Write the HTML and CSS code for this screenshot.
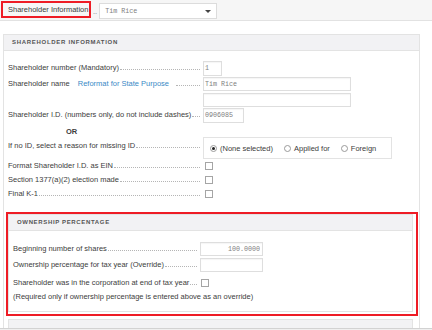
FILE: index.html
```html
<!DOCTYPE html>
<html lang="en">
<head>
  <meta charset="UTF-8" />
  <title>Shareholder Information</title>
  <link rel="stylesheet" href="styles.css">
</head>
<body>
  <div class="page">
    <div class="topbar">
      <div class="tab">Shareholder Information</div>
      <span class="tab-dots">..</span>
      <div class="select">
        <span class="select-value">Tim Rice</span>
        <span class="caret"></span>
      </div>
    </div>

    <div class="main">
      <div class="panel">
        <div class="panel-head">SHAREHOLDER INFORMATION</div>
        <div class="panel-body">

          <div class="row r-num">
            <div class="label"><span>Shareholder number (Mandatory)</span><span class="leader"></span></div>
            <input class="field w-num" type="text" value="1">
          </div>

          <div class="row r-name">
            <div class="label">
              <span>Shareholder name</span>
              <a class="link" href="#">Reformat for State Purpose</a>
              <span class="leader leader-short"></span>
            </div>
            <input class="field w-name" type="text" value="Tim Rice">
          </div>

          <div class="row r-name2">
            <div class="label"></div>
            <input class="field w-name" type="text" value="">
          </div>

          <div class="row r-id">
            <div class="label"><span>Shareholder I.D. (numbers only, do not include dashes)</span><span class="leader"></span></div>
            <input class="field w-id" type="text" value="0906085">
          </div>

          <div class="or">OR</div>

          <div class="row r-radio">
            <div class="label label-top"><span>If no ID, select a reason for missing ID</span><span class="leader"></span></div>
            <div class="radio-box">
              <span class="option"><span class="radio checked"></span>(None selected)</span>
              <span class="option"><span class="radio"></span>Applied for</span>
              <span class="option"><span class="radio"></span>Foreign</span>
            </div>
          </div>

          <div class="row r-check">
            <div class="label"><span>Format Shareholder I.D. as EIN</span><span class="leader"></span></div>
            <span class="checkbox"></span>
          </div>
          <div class="row r-check">
            <div class="label"><span>Section 1377(a)(2) election made</span><span class="leader"></span></div>
            <span class="checkbox"></span>
          </div>
          <div class="row r-check">
            <div class="label"><span>Final K-1</span><span class="leader"></span></div>
            <span class="checkbox"></span>
          </div>

          <div class="highlight">
            <div class="subpanel">
              <div class="panel-head sub-head">OWNERSHIP PERCENTAGE</div>
              <div class="sub-body">
                <div class="row r-own">
                  <div class="label label-own"><span>Beginning number of shares</span><span class="leader"></span></div>
                  <input class="field w-own num" type="text" value="100.0000">
                </div>
                <div class="row r-own">
                  <div class="label label-own"><span>Ownership percentage for tax year (Override)</span><span class="leader"></span></div>
                  <input class="field w-own" type="text" value="">
                </div>
                <div class="row r-own-check">
                  <div class="label label-own"><span>Shareholder was in the corporation at end of tax year</span><span class="leader"></span></div>
                  <span class="checkbox"></span>
                </div>
                <div class="note">(Required only if ownership percentage is entered above as an override)</div>
              </div>
            </div>
          </div>

          <div class="subpanel next">
            <div class="panel-head sub-head">&nbsp;</div>
            <div class="sub-body tall"></div>
          </div>

        </div>
      </div>
    </div>

    <div class="hbar"></div>
  </div>
</body>
</html>
```

FILE: styles.css
```css
:root {
  --text: #3c3c3c;
  --muted: #808080;
  --line: #e3e3e3;
  --head-bg: #f2f2f4;
  --red: #ee1c25;
  --link: #3a8ac6;
}

* {
  box-sizing: border-box;
  margin: 0;
  padding: 0;
}

body {
  font-family: "Liberation Sans", Arial, sans-serif;
  font-size: 7.5px;
  color: var(--text);
  background: #ffffff;
}

.page {
  height: 330px;
  display: flex;
  flex-direction: column;
  overflow: hidden;
}

/* top strip with the section picker */
.topbar {
  height: 21px;
  flex: none;
  display: flex;
  align-items: flex-start;
  padding: 1px 0 0 1px;
  background: #f6f6f6;
  border-bottom: 1px solid #e2e2e2;
}

.tab {
  width: 90px;
  height: 17px;
  border: 2px solid var(--red);
  padding-left: 5px;
  line-height: 13px;
  background: #f7f7f7;
}

.tab-dots {
  margin: 6px 0 0 2px;
  line-height: 10px;
  color: var(--muted);
}

.select {
  width: 118px;
  height: 16px;
  margin: 2px 0 0 2px;
  border: 1px solid #dcdcdc;
  background: #ffffff;
  display: flex;
  align-items: center;
  justify-content: space-between;
  padding: 0 5px 0 5px;
}

.select-value {
  font-family: "Liberation Mono", monospace;
  font-size: 6.7px;
  color: var(--muted);
}

.caret {
  width: 0;
  height: 0;
  border-left: 3px solid transparent;
  border-right: 3px solid transparent;
  border-top: 3px solid #444444;
}

.main {
  flex: 1;
  overflow: hidden;
  padding-top: 13px;
}

.panel {
  width: 417px;
  margin-left: 3px;
  border: 1px solid var(--line);
  border-bottom: 0;
  min-height: 400px;
}

.panel-head {
  height: 16px;
  background: var(--head-bg);
  border-bottom: 1px solid var(--line);
  padding-left: 8px;
  font-size: 6px;
  font-weight: bold;
  letter-spacing: 0.7px;
  line-height: 15px;
  color: #555555;
}

.panel-body {
  padding: 9px 1px 0 4px;
}

.row {
  display: flex;
  align-items: center;
}

.r-num { height: 16px; }
.r-name { height: 16px; }
.r-name2 { height: 15px; }
.r-id { height: 16px; }
.r-radio { height: 22px; }
.r-check { height: 14px; }

.label {
  width: 192px;
  flex: none;
  display: flex;
  align-items: baseline;
  margin-right: 3px;
  white-space: nowrap;
  line-height: 10px;
}

.label-top {
  align-self: flex-start;
  margin-top: 4px;
}

.leader {
  flex: 1;
  margin-left: 1px;
  border-bottom: 1px dotted #b5b5b5;
}

.link {
  color: var(--link);
  text-decoration: none;
  margin-left: 8px;
}

.leader-short {
  margin-left: 7px;
}

.field {
  height: 14px;
  border: 1px solid #dedede;
  box-shadow: inset 0 1px 1px rgba(0, 0, 0, 0.04);
  font-family: "Liberation Mono", monospace;
  font-size: 6.7px;
  color: var(--muted);
  padding: 0 1px;
  outline: none;
  background: #ffffff;
}

.w-num { width: 19px; height: 15px; }
.w-name { width: 148px; }
.w-id { width: 41px; height: 15px; }
.w-own { width: 63px; }
.num { text-align: right; padding-right: 2px; }

.or {
  height: 14px;
  padding: 4px 0 0 58px;
  line-height: 10px;
  font-weight: bold;
}

.radio-box {
  width: 189px;
  height: 22px;
  border: 1px solid var(--line);
  display: flex;
  align-items: center;
  padding-left: 6px;
}

.option {
  display: flex;
  align-items: center;
  margin-right: 11px;
  white-space: nowrap;
}

.radio {
  width: 7px;
  height: 7px;
  border: 1px solid #9a9a9a;
  border-radius: 50%;
  margin-right: 3px;
  background: #ffffff;
  display: flex;
  align-items: center;
  justify-content: center;
}

.radio.checked::after {
  content: "";
  width: 3px;
  height: 3px;
  border-radius: 50%;
  background: #222222;
}

.checkbox {
  width: 8px;
  height: 8px;
  border: 1px solid #a5a5a5;
  background: #ffffff;
  margin-left: 2px;
}

/* red outline round the ownership block */
.highlight {
  width: 412px;
  margin: 11px 0 0 -2px;
  border: 2px solid var(--red);
  padding: 0 4px 2px 0;
}

.subpanel {
  width: 405px;
  border: 1px solid var(--line);
}

.sub-head {
  padding-left: 8px;
  letter-spacing: 0.65px;
}

.sub-body {
  padding: 10px 0 7px 4px;
}

.r-own { height: 16px; }
.r-own-check { height: 14px; margin-top: 3px; }

.label-own {
  width: 184px;
}

.r-own-check .checkbox {
  margin-left: 1px;
}

.note {
  height: 14px;
  line-height: 14px;
  white-space: nowrap;
}

.next {
  margin-top: 3px;
}

.tall {
  height: 60px;
}

.hbar {
  height: 2px;
  flex: none;
  border-top: 1px solid #d2d2d2;
  background: #efefef;
}
```
